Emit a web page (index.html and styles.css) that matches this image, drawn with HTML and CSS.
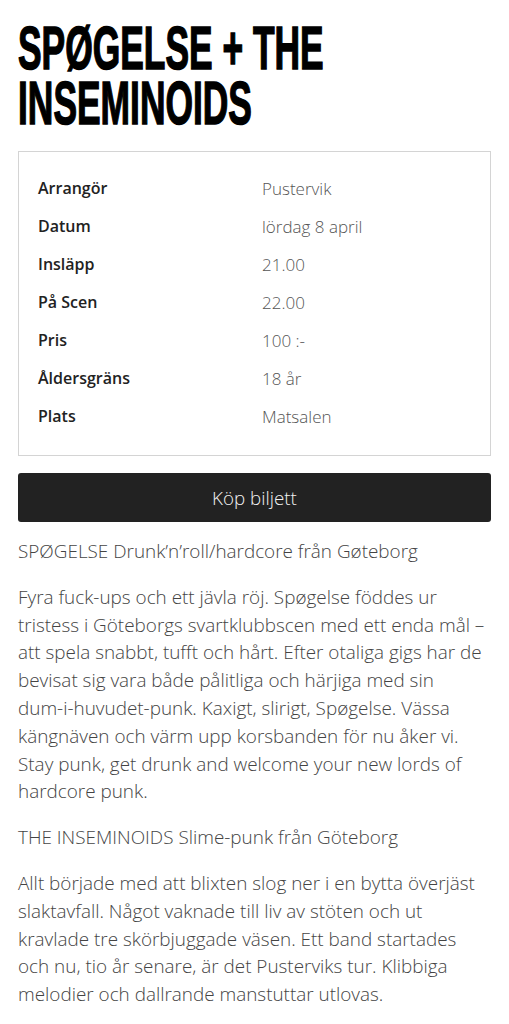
FILE: index.html
```html
<!DOCTYPE html>
<html lang="sv">
<head>
    <meta charset="UTF-8">
    <meta name="viewport" content="width=device-width, initial-scale=1.0">
    <title>SPØGELSE + THE INSEMINOIDS</title>
    <link rel="stylesheet" href="styles.css">
</head>

<body>
    <div class="event">
        <h1 class="event-title">SPØGELSE + THE INSEMINOIDS</h1>

        <div class="event-info">
            <div class="info-row"><span class="info-label">Arrangör</span><span class="info-value">Pustervik</span></div>
            <div class="info-row"><span class="info-label">Datum</span><span class="info-value">lördag 8 april</span></div>
            <div class="info-row"><span class="info-label">Insläpp</span><span class="info-value">21.00</span></div>
            <div class="info-row"><span class="info-label">På Scen</span><span class="info-value">22.00</span></div>
            <div class="info-row"><span class="info-label">Pris</span><span class="info-value">100 :-</span></div>
            <div class="info-row"><span class="info-label">Åldersgräns</span><span class="info-value">18 år</span></div>
            <div class="info-row"><span class="info-label">Plats</span><span class="info-value">Matsalen</span></div>
        </div>

        <a class="buy-button" href="#">Köp biljett</a>

        <div class="event-text">
            <p>SPØGELSE Drunk’n’roll/hardcore från Gøteborg</p>
            <p>Fyra fuck-ups och ett jävla röj. Spøgelse föddes ur tristess i Göteborgs svartklubbscen med ett enda mål – att spela snabbt, tufft och hårt. Efter otaliga gigs har de bevisat sig vara både pålitliga och härjiga med sin <span class="nowrap">dum-i-huvudet-punk.</span> Kaxigt, slirigt, Spøgelse. Vässa kängnäven och värm upp korsbanden för nu åker vi. Stay punk, get drunk and welcome your new lords of hardcore punk.</p>
            <p>THE INSEMINOIDS Slime-punk från Göteborg</p>
            <p>Allt började med att blixten slog ner i en bytta överjäst slaktavfall. Något vaknade till liv av stöten och ut kravlade tre skörbjuggade väsen. Ett band startades och nu, tio år senare, är det Pusterviks tur. Klibbiga melodier och dallrande manstuttar utlovas.</p>
        </div>
    </div>
</body>

</html>
```

FILE: styles.css
```css
body {
    margin: 0;
    background: #fff;
    font-family: "Open Sans", "Noto Sans", sans-serif;
    color: #444;
}

.event {
    padding: 0 18px;
}

/* no condensed display face offline, so squeeze a bold sans */
.event-title {
    width: 815px;
    margin: 21px 0 20px;
    font-family: "Liberation Sans", Arial, sans-serif;
    font-weight: bold;
    font-size: 61px;
    line-height: 55px;
    color: #000;
    -webkit-text-stroke: 1.5px #000;
    transform: scaleX(0.58);
    transform-origin: left top;
}

.event-info {
    border: 1px solid #d4d4d4;
    padding: 17px 19px 20px;
}

.info-row {
    display: grid;
    grid-template-columns: 224px 1fr;
    height: 38px;
    align-items: center;
}

.info-label {
    font-size: 16px;
    font-weight: 600;
    color: #222;
}

.info-value {
    font-size: 17px;
    font-weight: 300;
    color: #555;
}

.buy-button {
    display: flex;
    align-items: center;
    justify-content: center;
    height: 49px;
    margin-top: 17px;
    background: #222;
    border-radius: 3px;
    color: #f2f2f2;
    font-size: 18.8px;
    font-weight: 300;
    text-decoration: none;
}

.event-text {
    margin-top: 16px;
}

.event-text p {
    margin: 0 0 18px;
    font-size: 18.9px;
    font-weight: 300;
    line-height: 27.8px;
}

.nowrap {
    white-space: nowrap;
}
```
